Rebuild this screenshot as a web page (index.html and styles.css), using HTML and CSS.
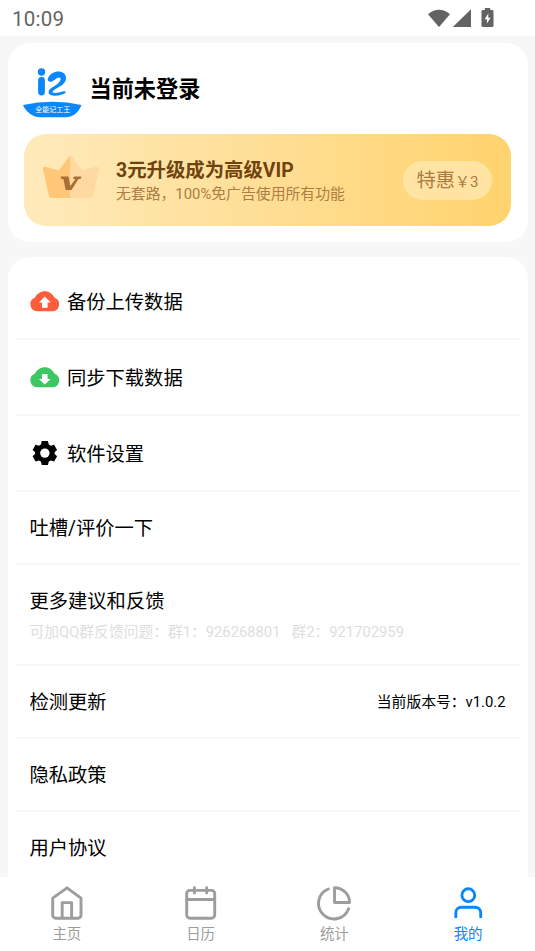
FILE: index.html
```
<!DOCTYPE html>
<html lang="zh-CN">
<head>
<meta charset="utf-8">
<title>我的</title>
<link rel="stylesheet" href="styles.css">
</head>
<body>
<header class="status">
  <span class="clock">10:09</span>
  <svg class="status-icons" width="70" height="22" viewBox="0 0 70 22" fill="#636363">
    <path d="M0 6.200Q11 -2.700 22 6.200L11 19Z"/>
    <path d="M43 1.300V19H24.800Z"/>
    <path fill-rule="evenodd" d="M56.800 0h5.400v1.900h2a1.300 1.300 0 0 1 1.300 1.300v14.500a1.300 1.300 0 0 1-1.300 1.300h-9.400a1.300 1.300 0 0 1-1.300-1.300V3.200a1.300 1.300 0 0 1 1.300-1.300h2zM60.300 5.600l-3.700 5.700h2.300v4.200l3.700-5.700h-2.300z"/>
  </svg>
</header>
<main class="content">
  <section class="card profile">
    <div class="user">
      <svg class="logo" width="60" height="52" viewBox="0 0 60 52">
        <circle cx="18.500" cy="5" r="3.700" fill="#0a87fb"/>
        <path d="M18.500 13.500V25" stroke="#0a87fb" stroke-width="6.800" stroke-linecap="round"/>
        <path d="M24.800 11.500C26.500 6.500 31.500 4.300 36 4.400C41.500 4.700 44.200 9 42.500 13.800C40.500 18.500 34.500 20.800 30.700 23.200C28.900 24.500 29.200 25.800 31.200 25.900C35 26 38.500 24.400 42 24.200Q43.700 25.200 42 26.300C37.500 28.900 31 29.300 27.400 27.700C24.500 26.300 25.400 23 28 21.200C31.500 18.900 36.500 16.500 37.500 12.800C37.800 10.200 35.700 10 33.500 11.500C31 13.700 29 14.900 26.700 14.700Q24.300 14 24.800 11.500Z" fill="#0a87fb"/>
        <path d="M0 38Q30 31.500 58.500 38C56 45 50 50.300 43 50.300H17C9 50.300 3 44.500 0 38Z" fill="#0a87fb"/>
        <text class="logo-text" x="12.200" y="44.600">全能记工王</text>
      </svg>
      <h1 class="name">当前未登录</h1>
    </div>
    <div class="vip">
      <svg class="crown" width="58" height="46" viewBox="0 0 58 46">
        <path d="M28.500 0L17.500 14.500Q16.700 15.300 15.500 14.900L3.200 11.700Q.6 11.500 1 14.300L7 41Q7.400 43 9.400 43H28.500Z" fill="#fec878"/>
        <path d="M28.500 0L39.500 14.500Q40.300 15.300 41.500 14.900L53.800 11.700Q57.400 11.300 57 14.300L51 41Q50.600 43 48.600 43H28.500Z" fill="#fed9a2"/>
        <path d="M18.500 21.500H26.500L28.400 31L33.300 23.900H31L32 21.500H39.500L38.500 23.900H36.500L29.500 35H23.700L21.400 23.900H19.500Z" fill="#a87035"/>
      </svg>
      <div class="vip-text">
        <div class="vip-title">3元升级成为高级VIP</div>
        <div class="vip-sub">无套路，100%免广告使用所有功能</div>
      </div>
      <div class="price">特惠<span class="amount">￥3</span></div>
    </div>
  </section>
  <section class="card menu">
    <div class="row tall">
      <svg class="icon" width="30" height="22" viewBox="0 0 30 22">
        <path d="M7 21.200A7 7 0 0 1 4.800 7.700C7 3.600 10.500 1.200 14.800 1.200S22.300 3.600 24.600 7.700A7 7 0 0 1 22.800 21.200Z" fill="#fe5c3b"/>
        <path d="M14.800 6.400L20.700 12.500H17.600V17.800H12V12.500H8.900Z" fill="#fff"/>
      </svg>
      <span>备份上传数据</span>
    </div>
    <div class="row tall">
      <svg class="icon" width="30" height="22" viewBox="0 0 30 22">
        <path d="M7 21.200A7 7 0 0 1 4.800 7.700C7 3.600 10.500 1.200 14.800 1.200S22.300 3.600 24.600 7.700A7 7 0 0 1 22.800 21.200Z" fill="#3dc664"/>
        <path d="M14.800 18.600L20.700 12.900H17.600V7.900H12V12.900H8.900Z" fill="#fff"/>
      </svg>
      <span>同步下载数据</span>
    </div>
    <div class="row tall">
      <svg class="icon" width="30" height="30" viewBox="-3 -3 30 30">
        <path d="M8.800 0h6.100l.9 3.500 2 1.200 3.300-1 3 5.200-2.500 2.300v1.700l2.500 2.300-3 5.200-3.300-1-2 1.200-.9 3.400H8.800l-.9-3.400-2-1.200-3.300 1-3-5.200 2.500-2.300v-1.700L-.4 8.900l3-5.200 3.300 1 2-1.200z"/>
        <circle cx="11.850" cy="12.100" r="4.700" fill="#fff"/>
      </svg>
      <span>软件设置</span>
    </div>
    <div class="row">吐槽/评价一下</div>
    <div class="row feedback">
      <div>更多建议和反馈</div>
      <div class="hint">可加QQ群反馈问题：群1：926268801 &nbsp; 群2：921702959</div>
    </div>
    <div class="row">检测更新<span class="version">当前版本号：v1.0.2</span></div>
    <div class="row">隐私政策</div>
    <div class="row">用户协议</div>
  </section>
</main>
<nav class="tabs">
  <div class="tab">
    <svg width="36" height="36" viewBox="0 0 36 36"><path d="M18 2.800L32 13.200V30.200a3 3 0 0 1-3 3H6.700a3 3 0 0 1-3-3V13.200ZM13.200 33V17.600H22.600V33"/></svg>
    <span>主页</span>
  </div>
  <div class="tab">
    <svg width="36" height="36" viewBox="0 0 36 36"><rect x="3.700" y="5.400" width="28" height="27.800" rx="3.200"/><path d="M3.700 14.500H31.700M11.400 2.600V8M23.700 2.600V8"/></svg>
    <span>日历</span>
  </div>
  <div class="tab">
    <svg width="36" height="36" viewBox="0 0 36 36"><path d="M12.300 4A15.500 15.500 0 1 0 32.600 23.700M18.500 2.700V17.500H33.600A15 14.900 0 0 0 18.500 2.700Z"/></svg>
    <span>统计</span>
  </div>
  <div class="tab active">
    <svg width="36" height="36" viewBox="0 0 36 36"><circle cx="18.300" cy="10.200" r="6.400"/><path d="M5.800 31.900V27.700A5.500 5.500 0 0 1 11.300 22.200H25.200A5.500 5.500 0 0 1 30.700 27.700V31.900"/></svg>
    <span>我的</span>
  </div>
</nav>
</body>
</html>
```
FILE: styles.css
```
* { box-sizing: border-box; }
body {
  margin: 0;
  height: 951px;
  overflow: hidden;
  display: flex;
  flex-direction: column;
  background: #fff;
  color: #000;
  font-family: Roboto, "Noto Sans CJK SC", sans-serif;
  font-size: 19.300px;
}
svg { display: block; flex: none; }
.status {
  flex: none;
  height: 36px;
  padding: 0 39px 0 12px;
  display: flex;
  align-items: center;
  justify-content: space-between;
}
.clock { font-size: 20.500px; letter-spacing: .25px; color: #636363; padding-top: 2px; }
.status-icons { margin-top: 2px; margin-right: -2px; }
.content {
  flex: 1;
  min-height: 0;
  overflow: hidden;
  background: #f7f7f7;
  padding: 7px 7.500px 0;
}
.card { background: #fff; border-radius: 22px; }
.profile { height: 199px; padding: 24px 16.500px 0 16px; margin-bottom: 15px; }
.user { display: flex; height: 67px; margin-left: -1px; gap: 7px; }
.logo-text { font-size: 7px; fill: #fff; }
.name { margin: 5.500px 0 0; font-size: 22.200px; line-height: 32px; font-weight: 700; }
.vip {
  height: 92px;
  border-radius: 22px;
  background: linear-gradient(90deg, #ffeabb, #ffd36e);
  display: flex;
  align-items: center;
  padding: 0 19px 0 18.500px;
}
.crown { margin-bottom: 5px; }
.vip-text { margin: 2px 0 0 16px; flex: 1; white-space: nowrap; }
.vip-title { font-size: 19.400px; line-height: 26px; font-weight: 700; color: #6f420f; }
.vip-sub { font-size: 14.850px; line-height: 21px; color: #ad7d43; }
.price {
  width: 89px;
  height: 39px;
  border-radius: 20px;
  background: #ffe4a4;
  color: #ad7a40;
  display: flex;
  align-items: baseline;
  padding-left: 13.500px;
  line-height: 40px;
  white-space: nowrap;
}
.amount { font-size: 15px; }
.menu { padding: 7.500px 7.500px 0; min-height: 680px; }
.row {
  height: 73px;
  border-bottom: 2px solid #f7f7f7;
  padding: 0 14.500px;
  display: flex;
  align-items: center;
}
.row:last-child { border-bottom-color: transparent; }
.row.tall { height: 75.700px; gap: 7.500px; }
.row.tall .icon { margin-left: .3px; margin-right: -.3px; }
.row.feedback {
  height: 101px;
  flex-direction: column;
  align-items: flex-start;
  justify-content: flex-start;
  padding-top: 22.500px;
  line-height: 29px;
}
.hint { font-size: 14.770px; line-height: 33px; color: #dedede; white-space: nowrap; }
.version { margin-left: auto; font-size: 14.800px; position: relative; top: -1px; }
.tabs { flex: none; height: 74px; display: flex; background: #fff; }
.tab {
  flex: 1;
  display: flex;
  flex-direction: column;
  align-items: center;
  padding-top: 8px;
  color: #9d9d9d;
  font-size: 14.500px;
  line-height: 27px;
}
.tab svg { fill: none; stroke: currentColor; stroke-width: 2.900px; stroke-linecap: round; stroke-linejoin: round; }
.active { color: #0a87fb; }
```
